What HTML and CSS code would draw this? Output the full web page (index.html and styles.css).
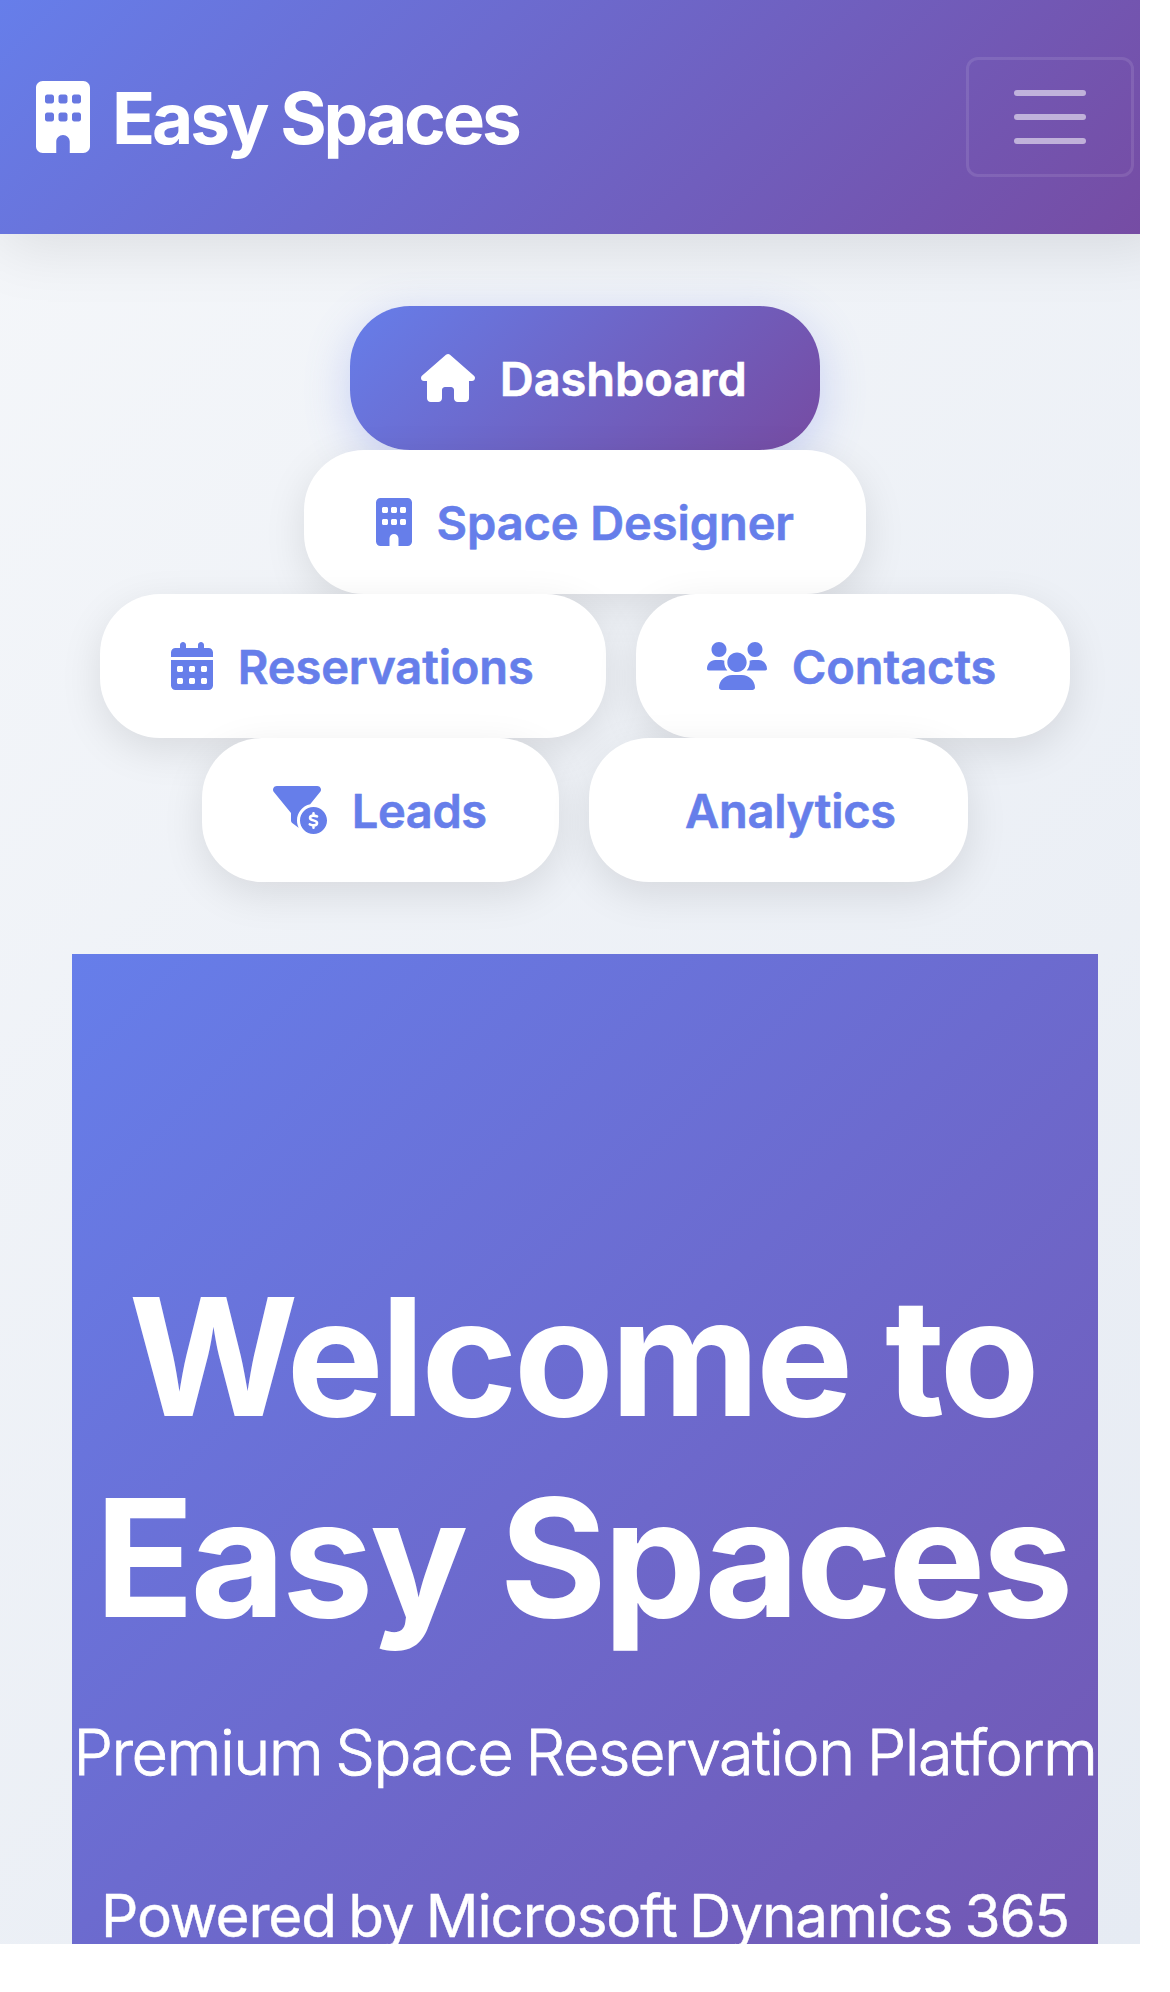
FILE: index.html
```html
<!DOCTYPE html>
<html lang="en">
<head>
<meta charset="utf-8">
<title>Easy Spaces</title>
<link rel="stylesheet" href="styles.css">
</head>
<body>
<div class="screen">
  <div class="page">
    <header class="topbar">
      <a class="brand">
        <svg class="brand-icon" viewBox="0 0 384 512"><use href="#building"/></svg>
        <span class="brand-name">Easy Spaces</span>
      </a>
      <button class="toggler" aria-label="Menu"><i></i><i></i><i></i></button>
    </header>
    <nav class="tabs">
      <a class="tab tab-dashboard active"><svg class="w54" viewBox="0 0 576 512"><path d="M575.8 255.5c0 18-15 32.1-32 32.1h-32l.7 160.2c0 2.7-.2 5.4-.5 8.1V472c0 22.1-17.9 40-40 40H456c-1.1 0-2.2 0-3.3-.1c-1.4 .1-2.8 .1-4.2 .1H416 392c-22.1 0-40-17.9-40-40V448 384c0-17.7-14.3-32-32-32H256c-17.7 0-32 14.3-32 32v64 24c0 22.1-17.9 40-40 40H160 128.1c-1.5 0-3-.1-4.5-.2c-1.2 .1-2.4 .2-3.6 .2H104c-22.1 0-40-17.9-40-40V360c0-.9 0-1.9 .1-2.8V287.6H32c-18 0-32-14-32-32.1c0-9 3-17 10-24L266.4 8c7-7 15-8 22-8s15 2 21 7L564.8 231.5c8 7 12 15 11 24z"/></svg><span class="label">Dashboard</span></a>
      <a class="tab tab-designer"><svg class="w36" viewBox="0 0 384 512"><path id="building" d="M48 0C21.5 0 0 21.5 0 48V464c0 26.5 21.5 48 48 48h96V432c0-26.5 21.5-48 48-48s48 21.5 48 48v80h96c26.5 0 48-21.5 48-48V48c0-26.5-21.5-48-48-48H48zM64 240c0-8.8 7.2-16 16-16h32c8.8 0 16 7.2 16 16v32c0 8.8-7.2 16-16 16H80c-8.8 0-16-7.2-16-16V240zm112-16h32c8.8 0 16 7.2 16 16v32c0 8.8-7.2 16-16 16H176c-8.8 0-16-7.2-16-16V240c0-8.8 7.2-16 16-16zm80 16c0-8.8 7.2-16 16-16h32c8.8 0 16 7.2 16 16v32c0 8.8-7.2 16-16 16H272c-8.8 0-16-7.2-16-16V240zM80 96h32c8.8 0 16 7.2 16 16v32c0 8.8-7.2 16-16 16H80c-8.8 0-16-7.2-16-16V112c0-8.8 7.2-16 16-16zm80 16c0-8.8 7.2-16 16-16h32c8.8 0 16 7.2 16 16v32c0 8.8-7.2 16-16 16H176c-8.8 0-16-7.2-16-16V112zM272 96h32c8.8 0 16 7.2 16 16v32c0 8.8-7.2 16-16 16H272c-8.8 0-16-7.2-16-16V112c0-8.8 7.2-16 16-16z"/></svg><span class="label">Space Designer</span></a>
      <a class="tab tab-reservations"><svg class="w42" viewBox="0 0 448 512"><path d="M128 0c17.7 0 32 14.3 32 32V64H288V32c0-17.7 14.3-32 32-32s32 14.3 32 32V64h48c26.5 0 48 21.5 48 48v48H0V112C0 85.5 21.5 64 48 64H96V32c0-17.7 14.3-32 32-32zM0 192H448V464c0 26.5-21.5 48-48 48H48c-26.5 0-48-21.5-48-48V192zm64 80v32c0 8.8 7.2 16 16 16h32c8.8 0 16-7.2 16-16V272c0-8.8-7.2-16-16-16H80c-8.8 0-16 7.2-16 16zm128 0v32c0 8.8 7.2 16 16 16h32c8.8 0 16-7.2 16-16V272c0-8.8-7.2-16-16-16H208c-8.8 0-16 7.2-16 16zm144-16c-8.8 0-16 7.2-16 16v32c0 8.8 7.2 16 16 16h32c8.8 0 16-7.2 16-16V272c0-8.8-7.2-16-16-16H336zM64 400v32c0 8.8 7.2 16 16 16h32c8.8 0 16-7.2 16-16V400c0-8.8-7.2-16-16-16H80c-8.8 0-16 7.2-16 16zm144-16c-8.8 0-16 7.2-16 16v32c0 8.8 7.2 16 16 16h32c8.8 0 16-7.2 16-16V400c0-8.8-7.2-16-16-16H208zm112 16v32c0 8.8 7.2 16 16 16h32c8.8 0 16-7.2 16-16V400c0-8.8-7.2-16-16-16H336c-8.8 0-16 7.2-16 16z"/></svg><span class="label">Reservations</span></a>
      <a class="tab tab-contacts"><svg class="w60" viewBox="0 0 640 512"><path d="M319.9 320c57.41 0 103.1-46.56 103.1-104c0-57.44-46.54-104-103.1-104c-57.41 0-103.1 46.56-103.1 104C215.9 273.4 262.5 320 319.9 320zM369.9 352H270.1C191.6 352 128 411.7 128 485.3C128 500.1 140.7 512 156.4 512h327.2C499.3 512 512 500.1 512 485.3C512 411.7 448.4 352 369.9 352zM512 160c44.18 0 80-35.82 80-80S556.2 0 512 0c-44.18 0-80 35.82-80 80S467.8 160 512 160zM183.9 216c0-5.449 .9824-10.63 1.609-15.91C174.6 194.1 162.6 192 149.9 192H88.08C39.44 192 0 233.8 0 285.3C0 295.6 7.887 304 17.62 304h199.5C196.7 280.2 183.9 249.7 183.9 216zM128 160c44.18 0 80-35.82 80-80S172.2 0 128 0C83.82 0 48 35.82 48 80S83.82 160 128 160zM551.9 192h-61.84c-12.8 0-24.88 3.037-35.86 8.24C454.8 205.5 455.8 210.6 455.8 216c0 33.71-12.78 64.21-33.16 88h199.7C632.1 304 640 295.6 640 285.3C640 233.8 600.6 192 551.9 192z"/></svg><span class="label">Contacts</span></a>
      <a class="tab tab-leads"><svg class="w54" viewBox="0 0 576 512"><path d="M3.853 22.87C10.47 8.904 24.54 0 40 0H472C487.5 0 501.5 8.904 508.1 22.87C514.8 36.84 512.7 53.37 502.1 65.33L396.4 195.6C316.2 212.1 256 283 256 368C256 395.4 262.3 421.4 273.5 444.5C271.8 443.7 270.3 442.7 268.8 441.6L204.8 393.6C196.7 387.6 192 378.1 192 368V288.1L9.042 65.33C-.745 53.37-2.765 36.84 3.853 22.87zM576 368C576 447.5 511.5 512 432 512C352.5 512 288 447.5 288 368C288 288.5 352.5 224 432 224C511.5 224 576 288.5 576 368z"/><path class="dollar" d="M432 290v24M432 422v24M470 325C457 319 445 316 430 316C408 316 395 326 395 341C395 376 470 357 470 395C470 412 454 420 434 420C419 420 405 415 392 409"/></svg><span class="label">Leads</span></a>
      <a class="tab tab-analytics"><span class="label">Analytics</span></a>
    </nav>
    <section class="hero">
      <h1 class="hero-title">Welcome to<br>Easy Spaces</h1>
      <p class="hero-lead">Premium Space Reservation Platform</p>
      <p class="hero-note">Powered by Microsoft Dynamics 365</p>
    </section>
  </div>
</div>
</body>
</html>
```
FILE: styles.css
```css
* { box-sizing: border-box; }
body { margin: 0; background: #fff; font-family: Inter, "Liberation Sans", sans-serif; overflow: hidden; }
.screen { width: 1140px; height: 1944px; overflow: hidden; background: linear-gradient(135deg, #f5f7fa 0%, #e6ebf3 100%); }
.page { width: 1170px; }

.topbar { display: flex; align-items: center; justify-content: space-between; height: 234px; padding: 0 36px; background: linear-gradient(135deg, #667eea 0%, #764ba2 100%); box-shadow: 0 12px 60px rgba(0, 0, 0, .1); }
.brand { display: flex; align-items: center; gap: 22px; color: #fff; font-size: 71px; font-weight: 700; line-height: 108px; letter-spacing: -3.1px; white-space: nowrap; }
.brand-icon { width: 54px; height: 72px; fill: currentColor; }
.brand-name { padding-top: 1px; }
.toggler { display: flex; flex-direction: column; align-items: center; justify-content: center; gap: 18px; width: 168px; height: 120px; padding: 0; border: 3px solid rgba(255, 255, 255, .1); border-radius: 12px; background: none; }
.toggler i { width: 72px; height: 6px; border-radius: 3px; background: rgba(255, 255, 255, .55); }

.tabs { display: flex; flex-wrap: wrap; justify-content: center; column-gap: 30px; padding: 72px 72px 0; }
.tab { display: flex; align-items: center; gap: 24.5px; height: 144px; padding-left: 71.3px; border-radius: 60px; background: #fff; color: #667eea; font-size: 47px; font-weight: 600; line-height: 72px; letter-spacing: -.1px; white-space: nowrap; box-shadow: 0 12px 42px rgba(0, 0, 0, .1); }
.tab svg { flex: none; height: 48px; fill: currentColor; }
.label { padding-top: 1px; -webkit-text-stroke: .6px currentColor; }
.w36 { width: 36px; }
.w42 { width: 42px; }
.w54 { width: 54px; }
.w60 { width: 60px; }
.tab .dollar { fill: none; stroke: #fff; stroke-width: 27; stroke-linecap: round; }
.tab.active { color: #fff; background: linear-gradient(135deg, #667eea 0%, #764ba2 100%); box-shadow: 0 12px 45px rgba(102, 126, 234, .3); }
.tab-dashboard { width: 470px; }
.tab-designer { width: 562px; padding-left: 72px; }
.tab-reservations { width: 506px; }
.tab-contacts { width: 434px; }
.tab-leads { width: 357px; letter-spacing: -.4px; }
.tab-analytics { width: 379px; padding-left: 96px; letter-spacing: -.25px; }

.hero { height: 1590px; margin: 72px 72px 0; padding-top: 302px; background: linear-gradient(135deg, #667eea 0%, #764ba2 100%); color: #fff; text-align: center; white-space: nowrap; }
.hero-title { margin: 0 5px 0 0; font-size: 163.5px; font-weight: 700; line-height: 201px; letter-spacing: -3.6px; }
.hero-lead { margin: 49px 0 0; font-size: 63px; font-weight: 300; line-height: 90px; letter-spacing: -1.55px; word-spacing: -3px; -webkit-text-stroke: .8px currentColor; }
.hero-note { margin: 74px 0 0; font-size: 58.5px; font-weight: 400; line-height: 90px; letter-spacing: -1.15px; word-spacing: -3px; -webkit-text-stroke: .4px currentColor; }
```
